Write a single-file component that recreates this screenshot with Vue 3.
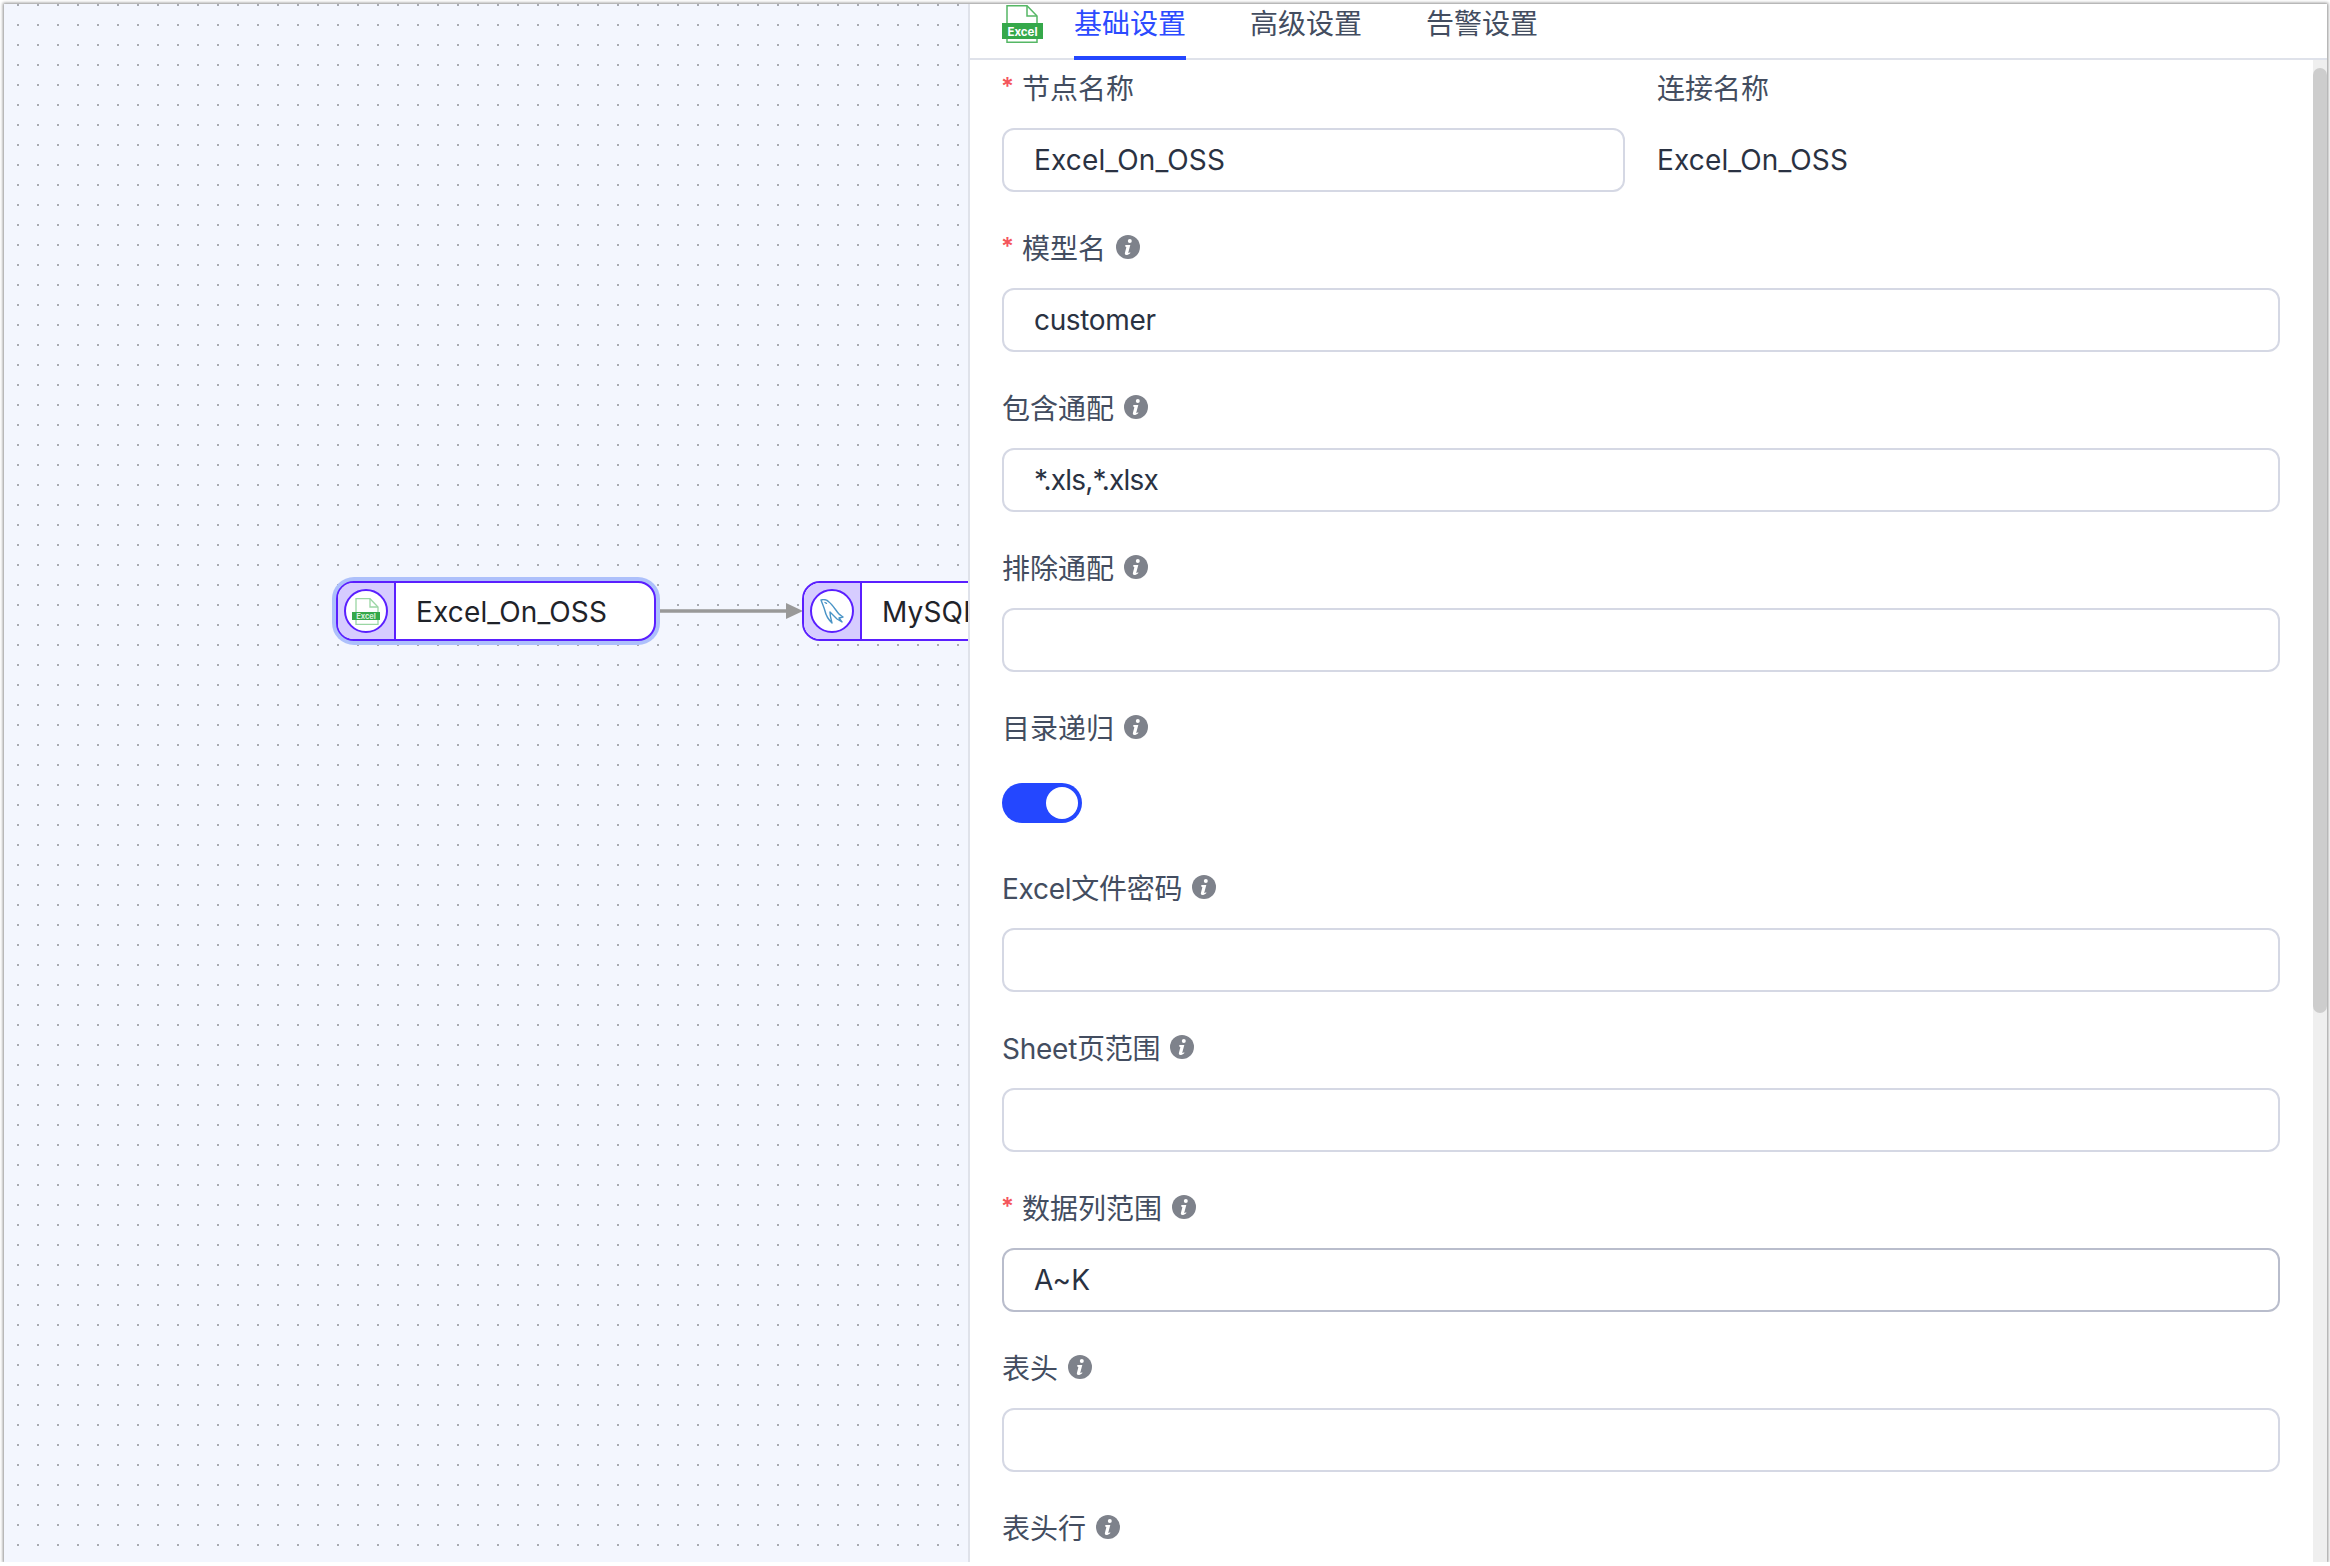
<script setup>
const tabs = ['基础设置', '高级设置', '告警设置']

const fields = [
  { label: '模型名', required: true, info: true, value: 'customer', fit: 'snug' },
  { label: '包含通配', info: true, value: '*.xls,*.xlsx', fit: 'tight' },
  { label: '排除通配', info: true, value: '' },
  { label: '目录递归', info: true, toggle: true },
  { label: 'Excel文件密码', info: true, value: '', narrow: true },
  { label: 'Sheet页范围', info: true, value: '', narrow: true },
  { label: '数据列范围', required: true, info: true, value: 'A~K', focused: true },
  { label: '表头', info: true, value: '' },
  { label: '表头行', info: true, value: '' },
]
</script>

<template>
  <div class="window">
    <div class="canvas">
      <svg class="dots" width="100%" height="100%">
        <defs>
          <pattern id="grid" x="13" y="0" width="20" height="20" patternUnits="userSpaceOnUse">
            <rect width="2" height="2" fill="#a8abb2" />
          </pattern>
        </defs>
        <rect width="100%" height="100%" fill="url(#grid)" />
      </svg>

      <svg class="edge" width="150" height="20" viewBox="0 0 150 20">
        <path d="M0 10h130" stroke="#999" stroke-width="3.500" />
        <path d="M128 2l17 8-17 8z" fill="#999" />
      </svg>

      <div class="node node-source">
        <div class="node-icon">
          <span class="node-circle">
            <svg class="node-excel" viewBox="0 0 28 27">
              <path d="M4 .7h14l8 8.300v17.300H4z" fill="#fff" stroke="#9ad6a4" stroke-width="1.300" />
              <path d="M18 .7v8.300h8" fill="none" stroke="#9ad6a4" stroke-width="1.300" />
              <rect x="0" y="14" width="28" height="8" fill="#35a84a" />
              <text x="14" y="20.700" text-anchor="middle" class="excel-small">Excel</text>
            </svg>
          </span>
        </div>
        <div class="node-name">Excel_On_OSS</div>
      </div>

      <div class="node node-target">
        <div class="node-icon">
          <span class="node-circle">
            <svg class="node-mysql" viewBox="0 0 24 25" fill="none" stroke="#4a94c6" stroke-width="1.400" stroke-linecap="round" stroke-linejoin="round">
              <path d="M1 1c3-1 6 0 8 2 4 3 7 9 10 12 1 1 3 2 4 3l-4 1 3 4-5-3c-3-3-6-6-7-7 0 4 1 7 2 11-3-3-6-7-7-12C4 8 2 4 1 1z" />
              <path d="M5 3.500l1.500 .8" />
            </svg>
          </span>
        </div>
        <div class="node-name">MySQL</div>
      </div>
    </div>

    <div class="panel">
      <div class="tabs">
        <svg class="tabs-icon" viewBox="0 0 41 38">
          <path d="M5 .8h20l10 10.200v26.200H5z" fill="#fff" stroke="#55b765" stroke-width="1.500" />
          <path d="M25 .8v10.200h10" fill="none" stroke="#55b765" stroke-width="1.500" />
          <rect x="0" y="18" width="41" height="16" fill="#35a84a" />
          <text x="20.500" y="30.500" text-anchor="middle" class="excel-text">Excel</text>
        </svg>
        <div v-for="(tab, i) in tabs" :key="tab" class="tab" :class="{ active: i === 0 }">{{ tab }}</div>
      </div>

      <div class="form">
        <div class="row">
          <div class="field">
            <label class="label"><i class="star">*</i>节点名称</label>
            <div class="input">Excel_On_OSS</div>
          </div>
          <div class="field">
            <label class="label">连接名称</label>
            <div class="plain">Excel_On_OSS</div>
          </div>
        </div>

        <div v-for="f in fields" :key="f.label" class="field">
          <label class="label" :class="{ narrow: f.narrow }">
            <i v-if="f.required" class="star">*</i>{{ f.label }}
            <svg v-if="f.info" class="info" viewBox="0 0 24 24">
              <circle cx="12" cy="12" r="12" fill="#7e828b" />
              <circle cx="13.800" cy="6" r="2" fill="#fff" />
              <path d="M9.300 10h5l-2 7.500c-.1.500.4.600 1.800-.3l.3.700c-1.500 1.500-2.900 2.100-4 2.100-1.100 0-1.800-.7-1.500-2l1.400-5.500c.1-.6-.2-.8-1-.8z" fill="#fff" />
            </svg>
          </label>
          <div v-if="f.toggle" class="toggle-box">
            <span class="toggle"><span class="knob"></span></span>
          </div>
          <div v-else class="input" :class="[f.fit, { focused: f.focused }]">{{ f.value }}</div>
        </div>
      </div>

      <div class="scrollbar"><div class="thumb"></div></div>
    </div>
  </div>
</template>

<style>
html,
body {
  margin: 0;
  background: #fff;
  overflow: hidden;
}
</style>

<style scoped>
.window {
  position: relative;
  display: flex;
  width: 2323px;
  height: 1558px;
  margin: 4px 0 0 4px;
  box-shadow: 0 0 3px 1px rgba(0, 0, 0, 0.45);
  overflow: hidden;
  font-family: Inter, "Noto Sans CJK SC", sans-serif;
}

.excel-text {
  font-family: Inter, sans-serif;
  font-size: 11.500px;
  font-weight: 700;
  fill: #fff;
}

.excel-small {
  font-family: Inter, sans-serif;
  font-size: 7.500px;
  font-weight: 700;
  fill: #d8f0dc;
}

.canvas {
  position: relative;
  flex: 0 0 964px;
  background: #f3f6fe;
  overflow: hidden;
}

.dots {
  position: absolute;
  inset: 0;
}

.edge {
  position: absolute;
  left: 654px;
  top: 597px;
}

.node {
  position: absolute;
  top: 577px;
  display: flex;
  height: 60px;
  box-sizing: border-box;
  border: 2px solid #5a1fff;
  border-radius: 18px;
  background: #fff;
  overflow: hidden;
}

.node-source {
  left: 332px;
  width: 320px;
  box-shadow: 0 0 0 4px #adc0fb;
  overflow: visible;
}

.node-target {
  left: 798px;
  width: 321px;
}

.node-icon {
  flex: 0 0 56px;
  display: flex;
  align-items: center;
  justify-content: center;
  background: #d6ccff;
  border-right: 2px solid #5a1fff;
  border-radius: 15px 0 0 15px;
}

.node-circle {
  display: flex;
  align-items: center;
  justify-content: center;
  width: 44px;
  height: 44px;
  box-sizing: border-box;
  border: 2px solid #5a1fff;
  border-radius: 50%;
  background: #fff;
}

.node-excel {
  width: 28px;
  height: 27px;
}

.node-mysql {
  width: 24px;
  height: 25px;
}

.node-name {
  padding-left: 20px;
  font-size: 28px;
  letter-spacing: 0.15px;
  line-height: 58px;
  color: #1f2329;
  white-space: nowrap;
}

.panel {
  position: relative;
  flex: 1;
  min-width: 0;
  box-sizing: border-box;
  border-left: 2px solid #dfe2ea;
  background: #fff;
  overflow: hidden;
}

.tabs {
  display: flex;
  align-items: flex-start;
  height: 56px;
  box-sizing: border-box;
  padding-left: 32px;
  border-bottom: 2px solid #dfe2ea;
}

.tabs-icon {
  flex: none;
  width: 41px;
  height: 38px;
  margin: 1px 31px 0 0;
}

.tab {
  height: 56px;
  box-sizing: border-box;
  margin-right: 64px;
  border-bottom: 4px solid transparent;
  font-size: 28px;
  line-height: 40px;
  color: #434d60;
}

.tab.active {
  color: #2c4bff;
  border-bottom-color: #2447ff;
}

.form {
  display: flex;
  flex-direction: column;
  gap: 36px;
  width: 1278px;
  padding: 8px 0 0 32px;
}

.row {
  display: grid;
  grid-template-columns: 1fr 1fr;
  column-gap: 32px;
}

.label {
  display: flex;
  align-items: center;
  height: 38px;
  margin-bottom: 22px;
  font-size: 28px;
  color: #434d60;
  white-space: nowrap;
}

.label.narrow {
  letter-spacing: -0.25px;
}

.star {
  align-self: flex-start;
  margin-top: 7px;
  margin-right: 8px;
  margin-left: -1px;
  font-style: normal;
  font-size: 24px;
  font-weight: 600;
  line-height: 24px;
  color: #f4555d;
}

.info {
  width: 24px;
  height: 24px;
  margin-left: 10px;
}

.input {
  height: 64px;
  box-sizing: border-box;
  padding-left: 30px;
  border: 2px solid #d5d8e4;
  border-radius: 12px;
  font-size: 28px;
  letter-spacing: 0.15px;
  line-height: 60px;
  color: #2a3242;
}

.input.focused {
  border-color: #b9bdcc;
}

.input.tight {
  letter-spacing: -0.8px;
}

.input.snug {
  letter-spacing: -0.35px;
}

.plain {
  height: 64px;
  font-size: 28px;
  letter-spacing: 0.15px;
  line-height: 64px;
  color: #2a3242;
}

.toggle-box {
  display: flex;
  align-items: center;
  height: 64px;
  padding-top: 6px;
  box-sizing: border-box;
}

.toggle {
  display: flex;
  justify-content: flex-end;
  align-items: center;
  width: 80px;
  height: 40px;
  box-sizing: border-box;
  padding-right: 4px;
  border-radius: 20px;
  background: #2447ff;
}

.knob {
  width: 32px;
  height: 32px;
  border-radius: 50%;
  background: #fff;
}

.scrollbar {
  position: absolute;
  top: 56px;
  right: 0;
  bottom: 0;
  width: 14px;
  background: #efefef;
}

.thumb {
  height: 945px;
  margin-top: 8px;
  border-radius: 7px;
  background: #cdcdcd;
}
</style>
